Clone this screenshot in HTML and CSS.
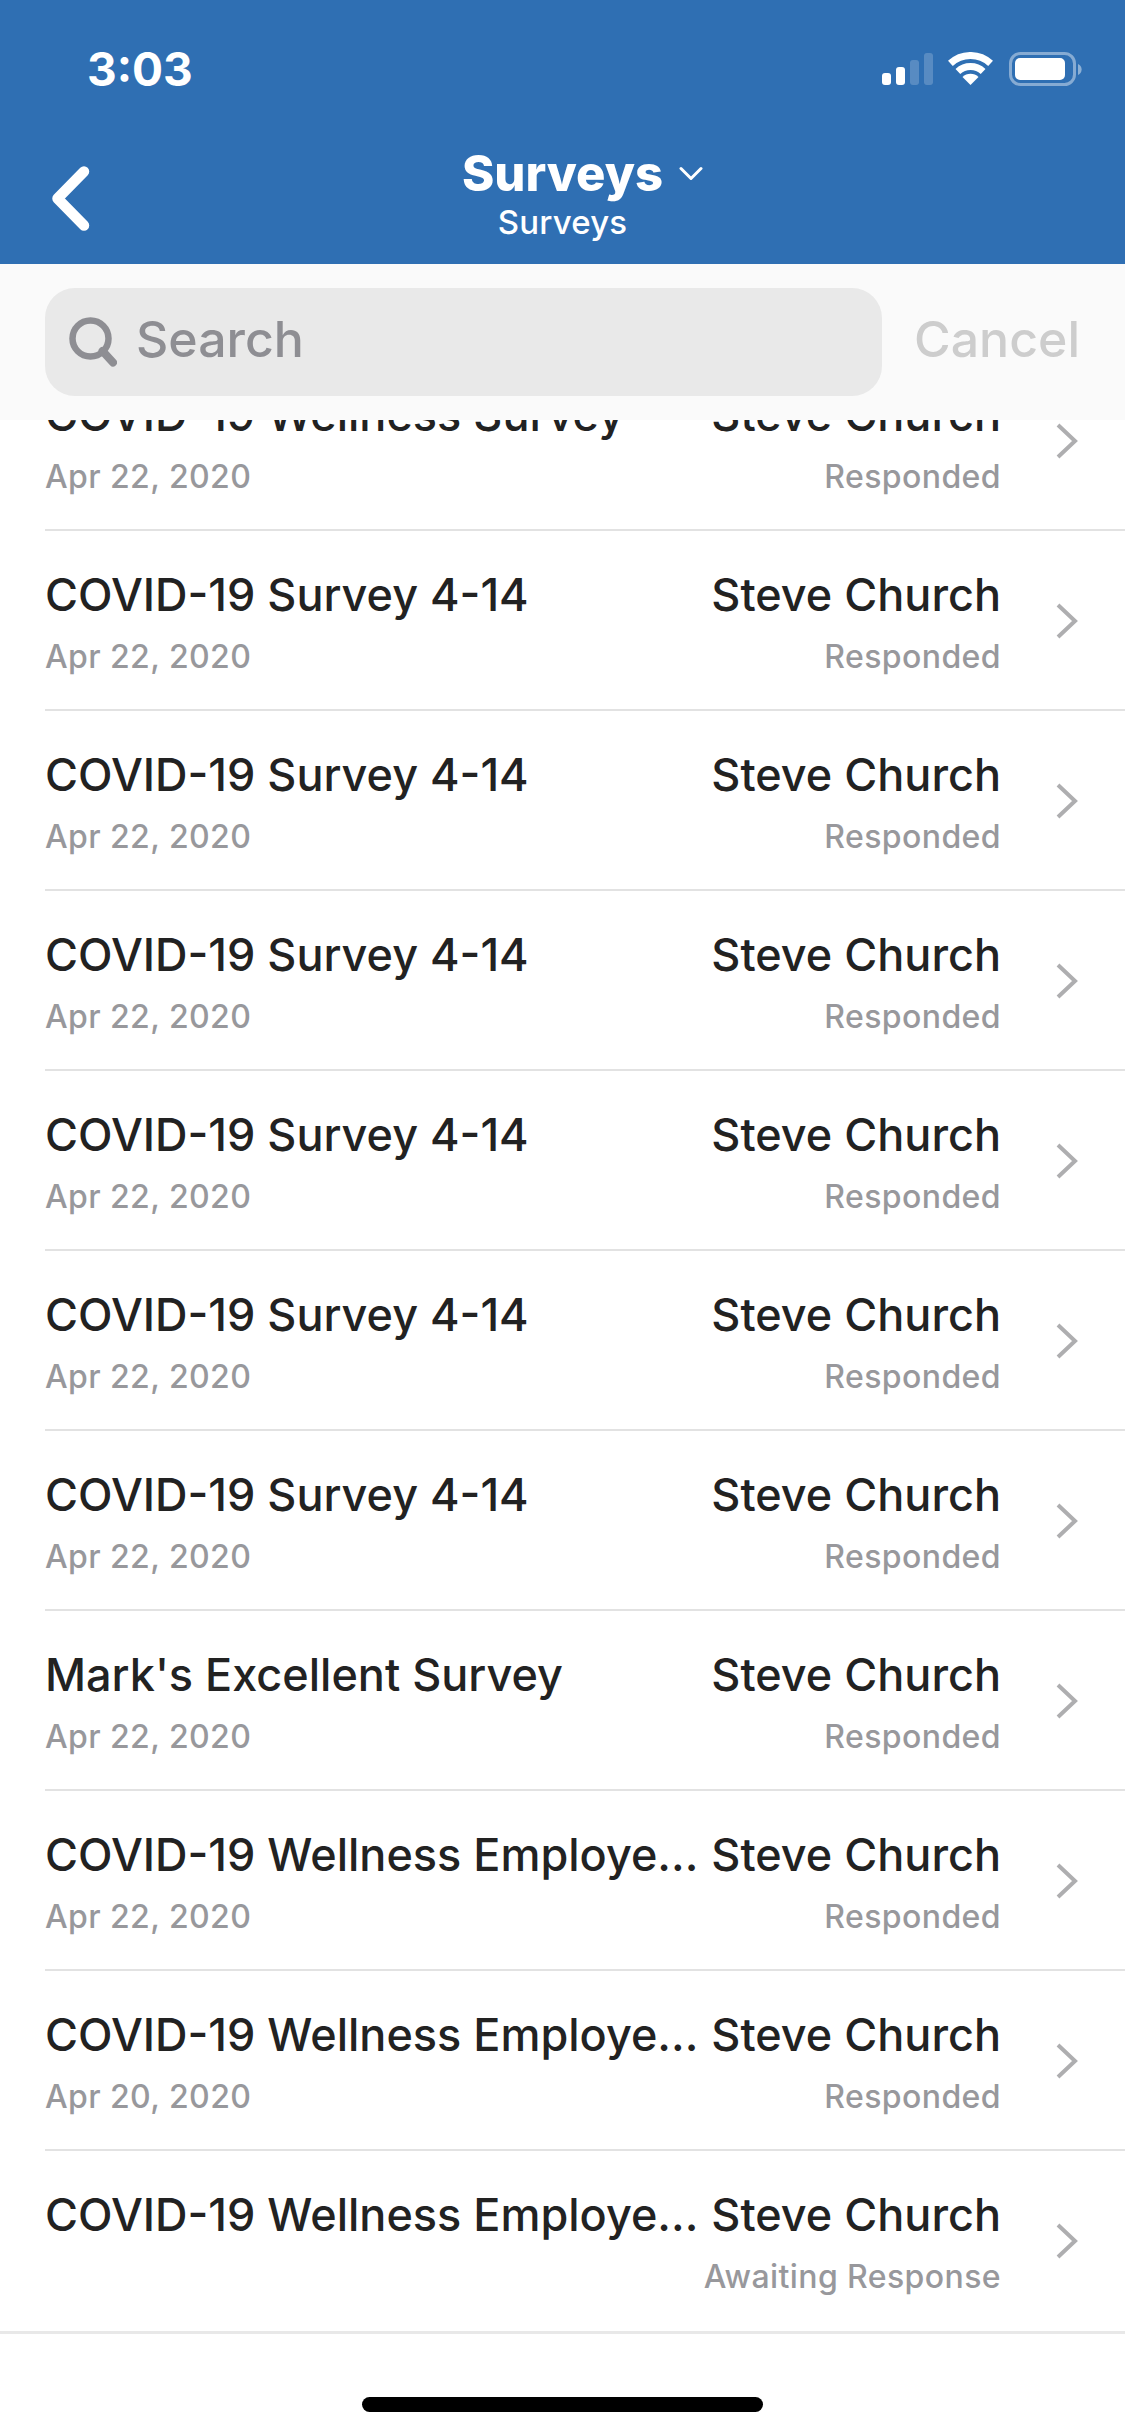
FILE: index.html
```html
<!DOCTYPE html>
<html lang="en">
<head>
    <meta charset="UTF-8">
    <meta name="viewport" content="width=device-width, initial-scale=1.0">
    <title>Surveys</title>
    <link rel="stylesheet" href="styles.css">
</head>
<body>
    <div class="screen">
        <header class="header">
            <div class="status-bar">
                <span class="time">3:03</span>
                <svg class="status-icons" width="200" height="34" viewBox="882 52 200 34">
                    <rect x="882" y="73" width="9" height="12" rx="3" fill="#fff"/>
                    <rect x="896" y="67" width="9" height="18" rx="3" fill="#fff"/>
                    <rect x="910" y="60" width="9" height="25" rx="3" fill="#fff" fill-opacity="0.2"/>
                    <rect x="924" y="53" width="9" height="32" rx="3" fill="#fff" fill-opacity="0.2"/>
                    <path d="M950.400 63.400A29.500 29.500 0 0 1 990.600 63.400" fill="none" stroke="#fff" stroke-width="7"/>
                    <path d="M957.900 71.500A18.500 18.500 0 0 1 983.100 71.500" fill="none" stroke="#fff" stroke-width="7"/>
                    <path d="M970.500 85L962.500 77A11.300 11.300 0 0 1 978.500 77Z" fill="#fff"/>
                    <rect x="1010.500" y="53.500" width="64" height="31" rx="10" fill="none" stroke="#fff" stroke-opacity="0.42" stroke-width="3"/>
                    <rect x="1015" y="58" width="50" height="22" rx="5" fill="#fff"/>
                    <path d="M1078 64a6 6 0 0 1 0 11z" fill="#fff" fill-opacity="0.45"/>
                </svg>
            </div>
            <div class="nav-bar">
                <svg class="back-icon" width="38" height="66" viewBox="52 166 38 66">
                    <path d="M84 171.500L57.500 198.500L84 225.500" fill="none" stroke="#fff" stroke-width="10.500" stroke-linecap="round" stroke-linejoin="round"/>
                </svg>
                <div class="nav-title">
                    <div class="nav-main">
                        <span>Surveys</span>
                        <svg width="24" height="15" viewBox="0 0 24 15">
                            <path d="M2 2.500L12 12.500L22 2.500" fill="none" stroke="#fff" stroke-width="3" stroke-linecap="round" stroke-linejoin="round"/>
                        </svg>
                    </div>
                    <div class="nav-sub">Surveys</div>
                </div>
            </div>
        </header>

        <div class="search-bar">
            <div class="search-field">
                <svg width="48" height="50" viewBox="0 0 48 50">
                    <circle cx="21.500" cy="21.500" r="18" fill="none" stroke="#8e8e93" stroke-width="6.500"/>
                    <path d="M33.500 34L44 45.500" fill="none" stroke="#8e8e93" stroke-width="8" stroke-linecap="round"/>
                </svg>
                <span>Search</span>
            </div>
            <span class="cancel">Cancel</span>
        </div>

        <main class="list">
            <ul class="rows">
                <li class="row">
                    <div class="row-left"><div class="row-title">COVID-19 Wellness Survey</div><div class="row-sub">Apr 22, 2020</div></div>
                    <div class="row-right"><div class="row-title">Steve Church</div><div class="row-sub">Responded</div></div>
                    <svg class="chevron" width="24" height="38" viewBox="0 0 24 38"><path d="M3 3L20 19L3 35" fill="none" stroke="#aeaeb0" stroke-width="4"/></svg>
                </li>
                <li class="row">
                    <div class="row-left"><div class="row-title">COVID-19 Survey 4-14</div><div class="row-sub">Apr 22, 2020</div></div>
                    <div class="row-right"><div class="row-title">Steve Church</div><div class="row-sub">Responded</div></div>
                    <svg class="chevron" width="24" height="38" viewBox="0 0 24 38"><path d="M3 3L20 19L3 35" fill="none" stroke="#aeaeb0" stroke-width="4"/></svg>
                </li>
                <li class="row">
                    <div class="row-left"><div class="row-title">COVID-19 Survey 4-14</div><div class="row-sub">Apr 22, 2020</div></div>
                    <div class="row-right"><div class="row-title">Steve Church</div><div class="row-sub">Responded</div></div>
                    <svg class="chevron" width="24" height="38" viewBox="0 0 24 38"><path d="M3 3L20 19L3 35" fill="none" stroke="#aeaeb0" stroke-width="4"/></svg>
                </li>
                <li class="row">
                    <div class="row-left"><div class="row-title">COVID-19 Survey 4-14</div><div class="row-sub">Apr 22, 2020</div></div>
                    <div class="row-right"><div class="row-title">Steve Church</div><div class="row-sub">Responded</div></div>
                    <svg class="chevron" width="24" height="38" viewBox="0 0 24 38"><path d="M3 3L20 19L3 35" fill="none" stroke="#aeaeb0" stroke-width="4"/></svg>
                </li>
                <li class="row">
                    <div class="row-left"><div class="row-title">COVID-19 Survey 4-14</div><div class="row-sub">Apr 22, 2020</div></div>
                    <div class="row-right"><div class="row-title">Steve Church</div><div class="row-sub">Responded</div></div>
                    <svg class="chevron" width="24" height="38" viewBox="0 0 24 38"><path d="M3 3L20 19L3 35" fill="none" stroke="#aeaeb0" stroke-width="4"/></svg>
                </li>
                <li class="row">
                    <div class="row-left"><div class="row-title">COVID-19 Survey 4-14</div><div class="row-sub">Apr 22, 2020</div></div>
                    <div class="row-right"><div class="row-title">Steve Church</div><div class="row-sub">Responded</div></div>
                    <svg class="chevron" width="24" height="38" viewBox="0 0 24 38"><path d="M3 3L20 19L3 35" fill="none" stroke="#aeaeb0" stroke-width="4"/></svg>
                </li>
                <li class="row">
                    <div class="row-left"><div class="row-title">COVID-19 Survey 4-14</div><div class="row-sub">Apr 22, 2020</div></div>
                    <div class="row-right"><div class="row-title">Steve Church</div><div class="row-sub">Responded</div></div>
                    <svg class="chevron" width="24" height="38" viewBox="0 0 24 38"><path d="M3 3L20 19L3 35" fill="none" stroke="#aeaeb0" stroke-width="4"/></svg>
                </li>
                <li class="row">
                    <div class="row-left"><div class="row-title">Mark's Excellent Survey</div><div class="row-sub">Apr 22, 2020</div></div>
                    <div class="row-right"><div class="row-title">Steve Church</div><div class="row-sub">Responded</div></div>
                    <svg class="chevron" width="24" height="38" viewBox="0 0 24 38"><path d="M3 3L20 19L3 35" fill="none" stroke="#aeaeb0" stroke-width="4"/></svg>
                </li>
                <li class="row">
                    <div class="row-left"><div class="row-title">COVID-19 Wellness Employe...</div><div class="row-sub">Apr 22, 2020</div></div>
                    <div class="row-right"><div class="row-title">Steve Church</div><div class="row-sub">Responded</div></div>
                    <svg class="chevron" width="24" height="38" viewBox="0 0 24 38"><path d="M3 3L20 19L3 35" fill="none" stroke="#aeaeb0" stroke-width="4"/></svg>
                </li>
                <li class="row">
                    <div class="row-left"><div class="row-title">COVID-19 Wellness Employe...</div><div class="row-sub">Apr 20, 2020</div></div>
                    <div class="row-right"><div class="row-title">Steve Church</div><div class="row-sub">Responded</div></div>
                    <svg class="chevron" width="24" height="38" viewBox="0 0 24 38"><path d="M3 3L20 19L3 35" fill="none" stroke="#aeaeb0" stroke-width="4"/></svg>
                </li>
                <li class="row row-last">
                    <div class="row-left"><div class="row-title">COVID-19 Wellness Employe...</div><div class="row-sub row-sub-empty"></div></div>
                    <div class="row-right"><div class="row-title">Steve Church</div><div class="row-sub">Awaiting Response</div></div>
                    <svg class="chevron" width="24" height="38" viewBox="0 0 24 38"><path d="M3 3L20 19L3 35" fill="none" stroke="#aeaeb0" stroke-width="4"/></svg>
                </li>
            </ul>
        </main>

        <div class="home-area">
            <div class="home-bar"></div>
        </div>
    </div>
</body>
</html>
```

FILE: styles.css
```css
* {
    box-sizing: border-box;
}
body {
    margin: 0;
    font-family: Inter, "Liberation Sans", sans-serif;
    background-color: white;
}
.screen {
    display: flex;
    flex-direction: column;
    height: 2436px;
    overflow: hidden;
}
.header {
    height: 264px;
    flex-shrink: 0;
    background-color: #2f6fb3;
    color: white;
}
.status-bar {
    height: 139px;
    padding: 52px 43px 0 87px;
    display: flex;
    justify-content: space-between;
    align-items: flex-start;
}
.time {
    font-size: 46px;
    font-weight: 700;
    line-height: 34px;
}
.nav-bar {
    display: flex;
    padding-left: 52px;
}
.back-icon {
    margin-top: 27px;
    flex-shrink: 0;
}
.nav-title {
    width: 945px;
    display: flex;
    flex-direction: column;
    align-items: center;
    padding-top: 6px;
}
.nav-main {
    display: flex;
    align-items: center;
    gap: 16px;
    padding-left: 40px;
    font-size: 49px;
    font-weight: 800;
    line-height: 57px;
}
.nav-sub {
    font-size: 33px;
    font-weight: 500;
    line-height: 40px;
    letter-spacing: 0.2px;
}
.search-bar {
    height: 156px;
    flex-shrink: 0;
    padding: 24px 45px 0;
    display: flex;
    align-items: flex-start;
    justify-content: space-between;
    background-color: #fafafa;
    position: relative;
    z-index: 1;
}
.search-field {
    width: 837px;
    height: 108px;
    padding: 0 0 6px 24px;
    display: flex;
    align-items: center;
    gap: 19px;
    background-color: #e9e9e9;
    border-radius: 30px;
    font-size: 50px;
    font-weight: 500;
    color: #8e8e93;
}
.search-field svg {
    margin-top: 6px;
}
.cancel {
    margin-top: 26px;
    font-size: 50px;
    font-weight: 500;
    line-height: 50px;
    color: #cdcdcd;
}
.list {
    height: 1914px;
    flex-shrink: 0;
    overflow: hidden;
}
.rows {
    list-style: none;
    margin: -69px 0 0;
    padding: 0;
}
.row {
    height: 180px;
    margin-left: 45px;
    padding: 4px 46px 0 0;
    display: flex;
    align-items: center;
    border-bottom: 2px solid #e2e2e2;
}
.row-last {
    height: 183px;
    margin-left: 0;
    padding: 2px 46px 0 45px;
    border-bottom: 3px solid #e8e8e8;
}
.row-left {
    flex: 1;
}
.row-right {
    text-align: right;
}
.row-title {
    font-size: 45px;
    font-weight: 550;
    line-height: 56px;
    color: #222;
    white-space: nowrap;
}
.row-sub {
    margin-top: 14px;
    font-size: 32px;
    font-weight: 500;
    line-height: 40px;
    letter-spacing: 0.4px;
    color: #98989c;
    white-space: nowrap;
}
.row-sub-empty {
    height: 40px;
}
.chevron {
    margin-left: 54px;
    margin-top: -2px;
    flex-shrink: 0;
}
.home-area {
    height: 102px;
    flex-shrink: 0;
    display: flex;
    justify-content: center;
    padding-top: 63px;
}
.home-bar {
    width: 401px;
    height: 15px;
    border-radius: 8px;
    background-color: black;
}
```
